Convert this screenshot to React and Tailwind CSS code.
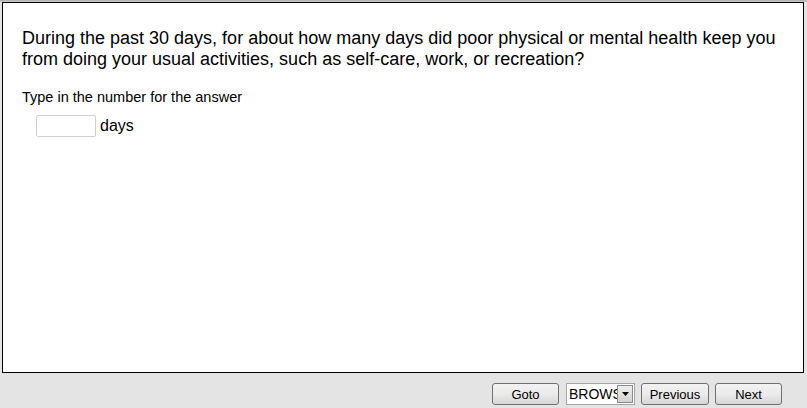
export default function App() {
    return (
        <div className="flex flex-col w-[807px] h-[408px] bg-[#e4e4e4] font-['Liberation_Sans',Arial,sans-serif] text-black overflow-hidden">
            {/* top shade */}
            <div className="h-[2px] bg-gradient-to-b from-[#a9a9a9] to-[#d4d4d4]" />

            {/* Question panel */}
            <div className="ml-[2px] mr-[3px] h-[371px] border border-black bg-white pl-[19px] pt-[25px]">
                <p className="text-[18px] leading-[21px]">
                    During the past 30 days, for about how many days did poor physical or mental health keep you
                    <br />
                    from doing your usual activities, such as self-care, work, or recreation?
                </p>

                <p className="mt-[19px] text-[14.5px] leading-[17px]">Type in the number for the answer</p>

                <div className="mt-[9px] ml-[14px] flex items-center gap-[4px]">
                    <input
                        type="text"
                        className="w-[60px] h-[22px] rounded-[2px] border border-[#cfcfcf] bg-white outline-none"
                    />
                    <span className="text-[16px] leading-[18px]">days</span>
                </div>
            </div>

            {/* Navigation */}
            <div className="flex items-center pl-[492px] pt-[10px] text-[13px]">
                <button className="w-[67px] h-[22px] rounded-[3px] border border-[#707070] bg-gradient-to-b from-[#f2f2f2] via-[#ebebeb] to-[#d6d6d6] leading-none">
                    Goto
                </button>
                <div className="ml-[7px] flex items-center w-[69px] h-[22px] border border-[#a5a5a5] bg-white">
                    <span className="flex-1 overflow-hidden whitespace-nowrap pl-[2px] text-[14px] leading-none">BROWSE</span>
                    <span className="flex items-center justify-center w-[16px] h-[18px] mr-[1px] border border-[#8a8a8a] bg-gradient-to-b from-[#f0f0f0] to-[#d0d0d0]">
                        <svg width="7" height="4" viewBox="0 0 7 4">
                            <path d="M0 0h7L3.5 4z" fill="#000" />
                        </svg>
                    </span>
                </div>
                <button className="ml-[6px] w-[68px] h-[22px] rounded-[3px] border border-[#707070] bg-gradient-to-b from-[#f2f2f2] via-[#ebebeb] to-[#d6d6d6] leading-none">
                    Previous
                </button>
                <button className="ml-[6px] w-[67px] h-[22px] rounded-[3px] border border-[#707070] bg-gradient-to-b from-[#f2f2f2] via-[#ebebeb] to-[#d6d6d6] leading-none">
                    Next
                </button>
            </div>
        </div>
    );
}
